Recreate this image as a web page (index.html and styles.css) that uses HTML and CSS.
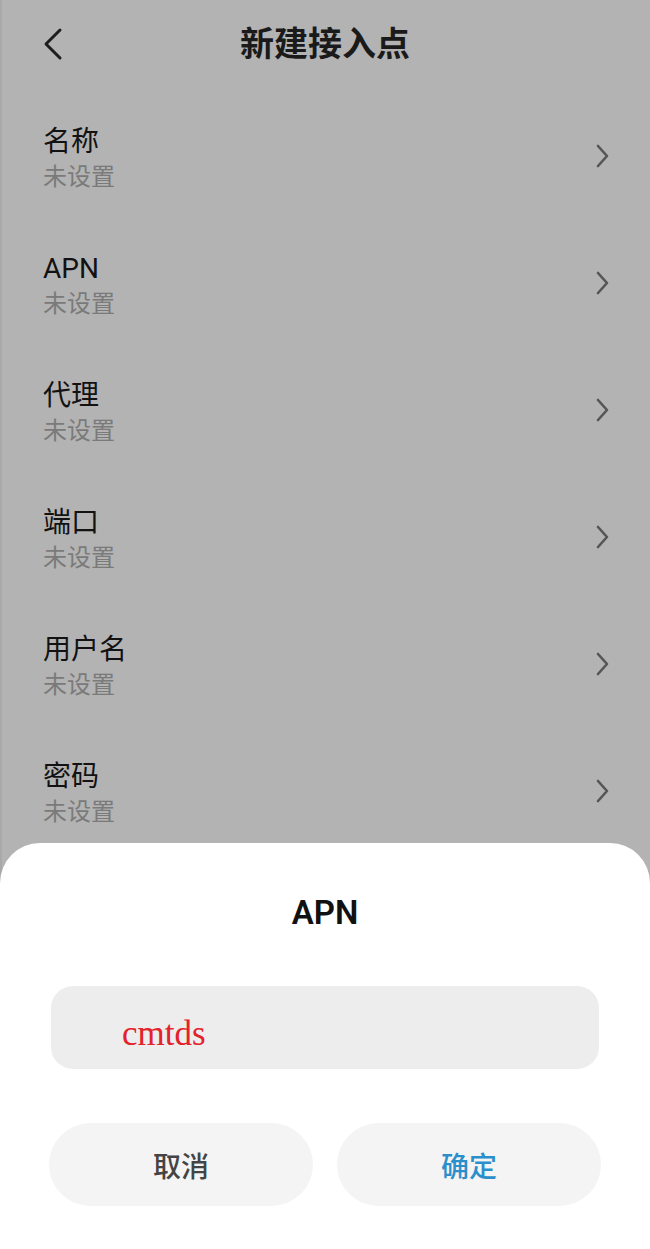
FILE: index.html
```html
<!DOCTYPE html>
<html lang="zh-CN">
<head>
    <meta charset="UTF-8">
    <meta name="viewport" content="width=device-width, initial-scale=1.0">
    <title>新建接入点</title>
    <link rel="stylesheet" href="styles.css">
</head>
<body>
    <div class="screen">
        <div class="header">
            <svg class="back" width="24" height="36" viewBox="0 0 24 36">
                <polyline points="18,5 4,19 18,33" fill="none" stroke="#1e1e1e" stroke-width="3" stroke-linecap="round" stroke-linejoin="round"/>
            </svg>
            <h1>新建接入点</h1>
        </div>
        <div class="list">
            <div class="row">
                <div class="text">
                    <div class="label">名称</div>
                    <div class="value">未设置</div>
                </div>
                <svg class="arrow" width="16" height="26" viewBox="0 0 16 26"><polyline points="4,3 13,13 4,23" fill="none" stroke="#555" stroke-width="2.6" stroke-linecap="round" stroke-linejoin="round"/></svg>
            </div>
            <div class="row">
                <div class="text">
                    <div class="label">APN</div>
                    <div class="value">未设置</div>
                </div>
                <svg class="arrow" width="16" height="26" viewBox="0 0 16 26"><polyline points="4,3 13,13 4,23" fill="none" stroke="#555" stroke-width="2.6" stroke-linecap="round" stroke-linejoin="round"/></svg>
            </div>
            <div class="row">
                <div class="text">
                    <div class="label">代理</div>
                    <div class="value">未设置</div>
                </div>
                <svg class="arrow" width="16" height="26" viewBox="0 0 16 26"><polyline points="4,3 13,13 4,23" fill="none" stroke="#555" stroke-width="2.6" stroke-linecap="round" stroke-linejoin="round"/></svg>
            </div>
            <div class="row">
                <div class="text">
                    <div class="label">端口</div>
                    <div class="value">未设置</div>
                </div>
                <svg class="arrow" width="16" height="26" viewBox="0 0 16 26"><polyline points="4,3 13,13 4,23" fill="none" stroke="#555" stroke-width="2.6" stroke-linecap="round" stroke-linejoin="round"/></svg>
            </div>
            <div class="row">
                <div class="text">
                    <div class="label">用户名</div>
                    <div class="value">未设置</div>
                </div>
                <svg class="arrow" width="16" height="26" viewBox="0 0 16 26"><polyline points="4,3 13,13 4,23" fill="none" stroke="#555" stroke-width="2.6" stroke-linecap="round" stroke-linejoin="round"/></svg>
            </div>
            <div class="row">
                <div class="text">
                    <div class="label">密码</div>
                    <div class="value">未设置</div>
                </div>
                <svg class="arrow" width="16" height="26" viewBox="0 0 16 26"><polyline points="4,3 13,13 4,23" fill="none" stroke="#555" stroke-width="2.6" stroke-linecap="round" stroke-linejoin="round"/></svg>
            </div>
            <div class="row">
                <div class="text">
                    <div class="label">服务器</div>
                    <div class="value">未设置</div>
                </div>
            </div>
        </div>

        <div class="sheet">
            <h2>APN</h2>
            <div class="input-box">
                <span class="input-text">cmtds</span>
            </div>
            <div class="buttons">
                <button class="btn cancel">取消</button>
                <button class="btn ok">确定</button>
            </div>
        </div>
    </div>
</body>
</html>
```

FILE: styles.css
```css
body {
    margin: 0;
    font-family: Roboto, "Noto Sans CJK SC", sans-serif;
    background: #b3b3b3;
}
.screen {
    position: relative;
    width: 650px;
    height: 1249px;
    overflow: hidden;
    background: #b3b3b3;
    box-shadow: inset 2px 0 0 #a9a9a9;
}
.header {
    height: 95px;
    display: flex;
    align-items: flex-start;
    justify-content: center;
    position: relative;
}
.header h1 {
    margin: 0;
    margin-top: 22px;
    font-size: 34px;
    line-height: 44px;
    font-weight: 700;
    color: #1a1a1a;
}
.back {
    position: absolute;
    left: 42px;
    top: 25px;
}
.row {
    height: 127px;
    padding: 0 40px 0 43px;
    display: flex;
    align-items: center;
    justify-content: space-between;
    box-sizing: border-box;
}
.label {
    font-size: 28px;
    line-height: 36px;
    color: #121212;
}
.value {
    font-size: 24px;
    line-height: 34px;
    color: #7a7a7a;
}
.arrow {
    margin-bottom: 6px;
}
.sheet {
    position: absolute;
    left: 0;
    right: 0;
    bottom: 0;
    height: 406px;
    background: #ffffff;
    border-radius: 40px 40px 0 0;
    padding: 48px 49px 0;
    box-sizing: border-box;
}
.sheet h2 {
    margin: 0;
    text-align: center;
    font-size: 33px;
    line-height: 44px;
    font-weight: 600;
    color: #111;
}
.input-box {
    margin: 51px 2px 0;
    height: 83px;
    background: #ededed;
    border-radius: 22px;
    display: flex;
    align-items: center;
    padding-left: 71px;
}
.input-text {
    font-family: "Liberation Serif", serif;
    font-size: 35px;
    color: #e3222a;
    margin-top: 12px;
}
.buttons {
    margin-top: 54px;
    display: flex;
    gap: 24px;
}
.btn {
    flex: 1;
    height: 83px;
    border: none;
    border-radius: 42px;
    background: #f4f4f4;
    font-family: "Noto Sans CJK SC", sans-serif;
    font-size: 28px;
    font-weight: 500;
}
.cancel {
    color: #444;
}
.ok {
    color: #2b8fcb;
}
```
